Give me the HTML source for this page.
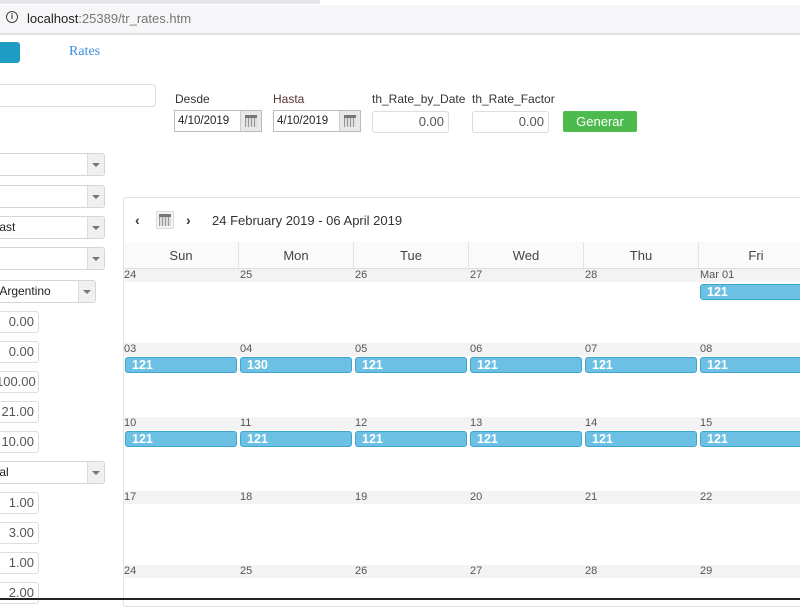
<!DOCTYPE html>
<html><head><style>
*{box-sizing:border-box;margin:0;padding:0}
body{width:800px;height:600px;overflow:hidden;background:#fff;font-family:"Liberation Sans",Arial,sans-serif;position:relative;color:#333}
.a{position:absolute}
.inp{position:absolute;border:1px solid #ddd;border-radius:3px;background:#fff;font-size:13px;color:#555;text-align:right;padding-right:4px;line-height:20px;height:22px}
.sel{position:absolute;border:1px solid #d5d5d5;border-radius:3px;background:#fff;height:23px;font-size:12px;line-height:21px;color:#222}
.sel .ar{position:absolute;right:0;top:0;width:17px;height:21px;background:#f0f0f0;border-left:1px solid #ddd}
.sel .ar:after{content:"";position:absolute;left:4px;top:9px;border-left:4px solid transparent;border-right:4px solid transparent;border-top:4px solid #777}
.lbl{position:absolute;font-size:12px;color:#333}
.date{position:absolute;border:1px solid #bbb;height:22px;font-size:11.5px;line-height:20px;padding-left:3px;background:#fff;color:#222}
.date .ic{position:absolute;right:0;top:0;width:21px;height:20px;background:#e8e8e8;border-left:1px solid #ccc}
.cal{width:12px;height:12px;position:absolute;left:4px;top:4px;background:repeating-linear-gradient(90deg,#999 0 1px,#ddd 1px 3px);border-top:3px solid #777}
.dh{position:absolute;top:242px;height:27px;border-right:1px solid #e3e3e3;font-size:13px;color:#444;text-align:center;line-height:27px;background:#fafafa;width:115px}
.strip{position:absolute;left:124px;width:676px;height:13px;background:#f3f3f3}
.dn{position:absolute;font-size:11px;color:#555}
.ev{position:absolute;height:16px;background:#6bc0e3;border:1px solid #3fa4d0;border-radius:3px;color:#fff;font-weight:bold;font-size:12.5px;line-height:14px;padding-left:6px;width:112px}
</style></head><body>
<div class="a" style="left:0;top:0;width:320px;height:4px;background:#e5e5ea"></div>
<div class="a" style="left:0;top:5px;width:800px;height:28px;background:#f6f6f8"></div>
<div class="a" style="left:0;top:33px;width:800px;height:2px;background:#e0e0e0"></div>
<div class="a" style="left:6px;top:11px;width:12px;height:12px;border:1.5px solid #444;border-radius:50%;font-size:8px;line-height:9px;text-align:center;font-weight:bold">i</div>
<div class="a" style="left:27px;top:11px;font-size:13px;color:#222">localhost<span style="color:#777">:25389/tr_rates.htm</span></div>
<div class="a" style="left:0;top:42px;width:20px;height:21px;background:#1e9cc3;border-radius:0 3px 3px 0"></div>
<div class="a" style="left:69px;top:44px;font-family:'Liberation Serif',serif;font-size:14px;color:#3d8fdc">Rates</div>
<div class="a" style="left:-5px;top:84px;width:161px;height:23px;border:1px solid #ddd;border-radius:4px"></div>
<div class="lbl" style="left:175px;top:92px">Desde</div>
<div class="lbl" style="left:273px;top:92px;color:#533">Hasta</div>
<div class="lbl" style="left:372px;top:92px">th_Rate_by_Date</div>
<div class="lbl" style="left:472px;top:92px">th_Rate_Factor</div>
<div class="date" style="left:174px;top:110px;width:88px">4/10/2019<div class="ic"><div class="cal"></div></div></div>
<div class="date" style="left:273px;top:110px;width:88px">4/10/2019<div class="ic"><div class="cal"></div></div></div>
<div class="inp" style="left:372px;top:111px;width:77px">0.00</div>
<div class="inp" style="left:472px;top:111px;width:77px">0.00</div>
<div class="a" style="left:563px;top:111px;width:74px;height:21px;background:#4cba4c;border-radius:2px;color:#fff;font-size:13px;text-align:center;line-height:21px">Generar</div>

<div class="sel" style="left:-5px;top:153px;width:110px"><div class="ar"></div></div>
<div class="sel" style="left:-5px;top:185px;width:110px"><div class="ar"></div></div>
<div class="sel" style="left:-5px;top:216px;width:110px">&nbsp;ast<div class="ar"></div></div>
<div class="sel" style="left:-5px;top:247px;width:110px"><div class="ar"></div></div>
<div class="sel" style="left:-5px;top:280px;width:101px">&nbsp;Argentino<div class="ar"></div></div>
<div class="inp" style="left:-5px;top:311px;width:44px">0.00</div>
<div class="inp" style="left:-5px;top:341px;width:44px">0.00</div>
<div class="inp" style="left:-5px;top:371px;width:44px">100.00</div>
<div class="inp" style="left:-5px;top:401px;width:44px">21.00</div>
<div class="inp" style="left:-5px;top:431px;width:44px">10.00</div>
<div class="sel" style="left:-5px;top:461px;width:110px">&nbsp;al<div class="ar"></div></div>
<div class="inp" style="left:-5px;top:492px;width:44px">1.00</div>
<div class="inp" style="left:-5px;top:522px;width:44px">3.00</div>
<div class="inp" style="left:-5px;top:552px;width:44px">1.00</div>
<div class="inp" style="left:-5px;top:582px;width:44px">2.00</div>

<div class="a" style="left:123px;top:197px;width:690px;height:410px;border:1px solid #e3e3e3;border-radius:3px"></div>
<div class="a" style="left:135px;top:212px;font-size:14px;font-weight:bold;color:#333">‹</div>
<div class="a" style="left:156px;top:211px;width:18px;height:18px;border:1px solid #ddd;background:#f3f3f3"><div class="cal" style="left:2px;top:2px"></div></div>
<div class="a" style="left:186px;top:212px;font-size:14px;font-weight:bold;color:#333">›</div>
<div class="a" style="left:212px;top:213px;font-size:13px;color:#333">24 February 2019 - 06 April 2019</div>
<div class="a" style="left:124px;top:242px;width:676px;height:1px;background:#e3e3e3"></div>
<div class="dh" style="left:124px">Sun</div><div class="dh" style="left:239px">Mon</div><div class="dh" style="left:354px">Tue</div><div class="dh" style="left:469px">Wed</div><div class="dh" style="left:584px">Thu</div><div class="dh" style="left:699px">Fri</div>
<div class="a" style="left:124px;top:268px;width:676px;height:2px;background:#ddd"></div>

<div class="strip" style="top:269px"></div><div class="strip" style="top:343px"></div><div class="strip" style="top:417px"></div><div class="strip" style="top:491px"></div><div class="strip" style="top:565px"></div>

<div class="dn" style="left:124px;top:269px">24</div><div class="dn" style="left:240px;top:269px">25</div><div class="dn" style="left:355px;top:269px">26</div><div class="dn" style="left:470px;top:269px">27</div><div class="dn" style="left:585px;top:269px">28</div><div class="dn" style="left:700px;top:269px">Mar 01</div>
<div class="dn" style="left:124px;top:343px">03</div><div class="dn" style="left:240px;top:343px">04</div><div class="dn" style="left:355px;top:343px">05</div><div class="dn" style="left:470px;top:343px">06</div><div class="dn" style="left:585px;top:343px">07</div><div class="dn" style="left:700px;top:343px">08</div>
<div class="dn" style="left:124px;top:417px">10</div><div class="dn" style="left:240px;top:417px">11</div><div class="dn" style="left:355px;top:417px">12</div><div class="dn" style="left:470px;top:417px">13</div><div class="dn" style="left:585px;top:417px">14</div><div class="dn" style="left:700px;top:417px">15</div>
<div class="dn" style="left:124px;top:491px">17</div><div class="dn" style="left:240px;top:491px">18</div><div class="dn" style="left:355px;top:491px">19</div><div class="dn" style="left:470px;top:491px">20</div><div class="dn" style="left:585px;top:491px">21</div><div class="dn" style="left:700px;top:491px">22</div>
<div class="dn" style="left:124px;top:565px">24</div><div class="dn" style="left:240px;top:565px">25</div><div class="dn" style="left:355px;top:565px">26</div><div class="dn" style="left:470px;top:565px">27</div><div class="dn" style="left:585px;top:565px">28</div><div class="dn" style="left:700px;top:565px">29</div>

<div class="ev" style="left:700px;top:284px">121</div>
<div class="ev" style="left:125px;top:357px">121</div><div class="ev" style="left:240px;top:357px">130</div><div class="ev" style="left:355px;top:357px">121</div><div class="ev" style="left:470px;top:357px">121</div><div class="ev" style="left:585px;top:357px">121</div><div class="ev" style="left:700px;top:357px">121</div>
<div class="ev" style="left:125px;top:431px">121</div><div class="ev" style="left:240px;top:431px">121</div><div class="ev" style="left:355px;top:431px">121</div><div class="ev" style="left:470px;top:431px">121</div><div class="ev" style="left:585px;top:431px">121</div><div class="ev" style="left:700px;top:431px">121</div>
<div class="a" style="left:0;top:598px;width:800px;height:2px;background:#222"></div>
</body></html>
